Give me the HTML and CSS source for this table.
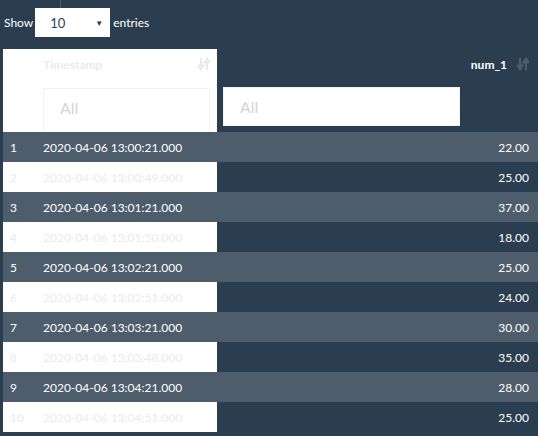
FILE: index.html
```html
<!DOCTYPE html>
<html>
<head>
<meta charset="utf-8">
<link rel="stylesheet" href="styles.css">
</head>
<body>
<div class="topline"></div>
<div class="length">
  <span>Show</span>
  <div class="select"><span>10</span><span class="caret">▼</span></div>
  <span>entries</span>
</div>
<div class="table">
  <div class="head">
    <div class="head-left">
      <div class="title-row light"><span>Timestamp</span>
        <svg class="sort" width="12" height="14" viewBox="0 0 12 14"><path d="M3 1v10M0.5 8.5L3 12.5 5.5 8.5z M9 13V3M6.5 5.5L9 1.5 11.5 5.5z" stroke="currentColor" stroke-width="2" fill="currentColor"/></svg>
      </div>
      <div class="filter clip"><span>All</span></div>
    </div>
    <div class="head-right">
      <div class="title-row dark"><span>num_1</span>
        <svg class="sort" width="12" height="14" viewBox="0 0 12 14"><path d="M3 1v10M0.5 8.5L3 12.5 5.5 8.5z M9 13V3M6.5 5.5L9 1.5 11.5 5.5z" stroke="currentColor" stroke-width="2" fill="currentColor"/></svg>
      </div>
      <div class="filter wide"><span>All</span></div>
    </div>
  </div>
  <div class="row odd"><div class="c1">1</div><div class="c2">2020-04-06 13:00:21.000</div><div class="c3">22.00</div></div>
  <div class="row even"><div class="c1">2</div><div class="c2">2020-04-06 13:00:49.000</div><div class="c3">25.00</div></div>
  <div class="row odd"><div class="c1">3</div><div class="c2">2020-04-06 13:01:21.000</div><div class="c3">37.00</div></div>
  <div class="row even"><div class="c1">4</div><div class="c2">2020-04-06 13:01:50.000</div><div class="c3">18.00</div></div>
  <div class="row odd"><div class="c1">5</div><div class="c2">2020-04-06 13:02:21.000</div><div class="c3">25.00</div></div>
  <div class="row even"><div class="c1">6</div><div class="c2">2020-04-06 13:02:51.000</div><div class="c3">24.00</div></div>
  <div class="row odd"><div class="c1">7</div><div class="c2">2020-04-06 13:03:21.000</div><div class="c3">30.00</div></div>
  <div class="row even"><div class="c1">8</div><div class="c2">2020-04-06 13:03:48.000</div><div class="c3">35.00</div></div>
  <div class="row odd"><div class="c1">9</div><div class="c2">2020-04-06 13:04:21.000</div><div class="c3">28.00</div></div>
  <div class="row even"><div class="c1">10</div><div class="c2">2020-04-06 13:04:51.000</div><div class="c3">25.00</div></div>
</div>
</body>
</html>
```
FILE: styles.css
```css
html, body {
  margin: 0;
  padding: 0;
  background: #2b3e50;
  font-family: Lato, "Open Sans", sans-serif;
  color: #ffffff;
  width: 538px;
  height: 436px;
  overflow: hidden;
}
.topline {
  height: 8px;
  width: 60px;
  border-right: 1px solid #4e5d6c;
}
.length {
  display: flex;
  align-items: center;
  gap: 3px;
  padding-left: 4px;
  font-size: 12px;
  height: 29px;
}
.select {
  width: 75px;
  height: 29px;
  background: #fff;
  color: #2b3e50;
  display: flex;
  align-items: center;
  justify-content: space-between;
  padding: 0 7px 0 15px;
  box-sizing: border-box;
  font-size: 13px;
  margin-left: -1px;
}
.select .caret {
  font-size: 8px;
  color: #2b3e50;
}
.table {
  margin: 12px 0 0 3px;
  width: 535px;
}
.head {
  display: flex;
  height: 83px;
}
.head-left {
  width: 214px;
  background: #fff;
  padding-left: 40px;
  box-sizing: border-box;
  overflow: hidden;
}
.head-right {
  flex: 1;
  padding-left: 6px;
}
.title-row {
  height: 30px;
  display: flex;
  align-items: center;
  justify-content: space-between;
  font-size: 12px;
  font-weight: bold;
}
.title-row.light {
  color: #ebebeb;
  padding-right: 7px;
}
.title-row.light .sort { color: #ebebeb; }
.title-row.dark {
  justify-content: flex-end;
  gap: 10px;
  padding-right: 9px;
  color: #fff;
}
.title-row.dark .sort { color: #4e5d6c; }
.filter {
  background: #fff;
  border: 1px solid #f2f2f2;
  box-sizing: border-box;
  height: 39px;
  display: flex;
  align-items: center;
  padding-left: 16px;
  font-size: 16px;
  color: #d4d4d4;
}
.filter.clip {
  width: 167px;
  height: 50px;
  margin-top: 9px;
  padding-bottom: 11px;
}
.filter.wide {
  width: 237px;
  margin-top: 8px;
}
.row {
  display: flex;
  height: 30px;
  font-size: 12px;
}
.row > div {
  display: flex;
  align-items: center;
}
.c1 { width: 40px; padding-left: 7px; box-sizing: border-box; }
.c2 { width: 174px; }
.c3 { flex: 1; justify-content: flex-end; padding-right: 9px; }
.odd { background: #4e5d6c; }
.even .c1, .even .c2 { background: #fff; color: #ebebeb; }
```
